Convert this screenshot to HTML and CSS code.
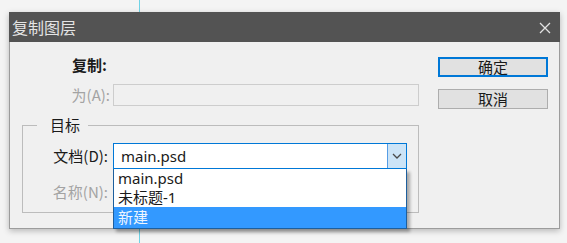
FILE: index.html
```html
<!DOCTYPE html>
<html>
<head>
    <meta charset="utf-8">
    <title>复制图层</title>
    <link rel="stylesheet" href="styles.css">
</head>
<body>
    <div class="dialog">
        <div class="titlebar">
            <span class="title">复制图层</span>
            <svg class="close" width="12" height="12" viewBox="0 0 12 12">
                <path d="M1 1 L11 11 M11 1 L1 11" stroke="#e2e2e2" stroke-width="1.3" fill="none"/>
            </svg>
        </div>
        <div class="content">
            <div class="form">
                <div class="row">
                    <span class="label bold">复制:</span>
                    <span></span>
                </div>
                <div class="row">
                    <span class="label disabled">为(A):</span>
                    <div class="field field-disabled"></div>
                </div>
                <fieldset class="group">
                    <legend>目标</legend>
                    <div class="group-row combo-row">
                        <span class="label">文档(D):</span>
                        <div class="combo">
                            <span class="combo-value">main.psd</span>
                            <span class="combo-button">
                                <svg width="10" height="6" viewBox="0 0 10 6">
                                    <path d="M1 1 L5 5 L9 1" stroke="#4a4a4a" stroke-width="1.3" fill="none"/>
                                </svg>
                            </span>
                            <ul class="combo-list">
                                <li>main.psd</li>
                                <li>未标题-1</li>
                                <li class="selected">新建</li>
                            </ul>
                        </div>
                    </div>
                    <div class="group-row name-row">
                        <span class="label disabled">名称(N):</span>
                        <div class="field field-disabled"></div>
                    </div>
                </fieldset>
            </div>
            <div class="buttons">
                <button class="btn btn-default">确定</button>
                <button class="btn">取消</button>
            </div>
        </div>
    </div>
</body>
</html>
```

FILE: styles.css
```css
body {
    margin: 0;
    padding: 12px 0 0 9px;
    font-family: "Noto Sans", "Noto Sans CJK SC", sans-serif;
    font-size: 15px;
    color: #1a1a1a;
    background: linear-gradient(to right, transparent 139px, #6fd3e6 139px, #6fd3e6 140px, transparent 140px), #f4f4f4;
    height: 231px;
    overflow: hidden;
}

.dialog {
    width: 551px;
    box-sizing: border-box;
    background-color: #f0f0f0;
    border: 1px solid #9c9c9c;
    border-top: none;
    box-shadow: 0 2px 6px rgba(0, 0, 0, 0.25);
}

.titlebar {
    height: 30px;
    background-color: #535353;
    display: flex;
    align-items: center;
    justify-content: space-between;
    padding: 0 9px 0 3px;
    margin: 0 -1px;
}

.title {
    font-family: "Noto Sans CJK SC", sans-serif;
    font-size: 16px;
    color: #e4e4e4;
    line-height: 30px;
}

.close {
    margin-top: 1px;
}

.content {
    display: flex;
    padding: 12px 0 15px 12px;
}

.form {
    width: 397px;
}

.row {
    display: grid;
    grid-template-columns: 88px 306px;
    column-gap: 3px;
    height: 22px;
    align-items: center;
    margin-bottom: 8px;
}

.label {
    font-family: "Noto Sans CJK SC", sans-serif;
    text-align: right;
    line-height: 18px;
    white-space: nowrap;
}

.bold {
    font-weight: bold;
    padding-right: 3px;
}

.disabled {
    color: #a3a3a3;
}

.field {
    height: 22px;
    box-sizing: border-box;
    border: 1px solid #cdcdcd;
}

.field-disabled {
    background-color: #f0f0f0;
}

.group {
    margin: 12px 0 0 0;
    padding: 11px 11px 8px 0;
    border: 1px solid #bcbcbc;
    min-width: 0;
}

.group legend {
    font-family: "Noto Sans CJK SC", sans-serif;
    margin-left: 14px;
    padding: 0 8px 0 13px;
    line-height: 14px;
}

.group-row {
    display: grid;
    grid-template-columns: 85px 294px;
    column-gap: 5px;
    align-items: center;
}

.combo-row {
    height: 26px;
    margin-bottom: 11px;
}

.name-row {
    height: 24px;
}

.name-row .field {
    height: 24px;
}

.combo {
    position: relative;
    height: 26px;
    box-sizing: border-box;
    border: 1px solid #0078d7;
    background-color: #fff;
    display: flex;
    align-items: center;
}

.combo-value {
    flex: 1;
    padding-left: 7px;
    line-height: 24px;
}

.combo-button {
    width: 18px;
    height: 24px;
    background-color: #cce4f7;
    border-left: 1px solid #569de5;
    display: flex;
    align-items: center;
    justify-content: center;
}

.combo-list {
    position: absolute;
    top: 25px;
    left: -1px;
    width: 294px;
    box-sizing: border-box;
    margin: 0;
    padding: 0;
    list-style: none;
    background-color: #fff;
    border: 1px solid #1d5f9e;
    border-top: none;
    box-shadow: 3px 3px 3px rgba(0, 0, 0, 0.3);
    z-index: 2;
}

.combo-list li {
    height: 19px;
    line-height: 19px;
    padding-left: 4px;
}

.combo-list li.selected {
    height: 21px;
    line-height: 21px;
    background-color: #3399ff;
    color: #eef6ff;
}

.buttons {
    display: flex;
    flex-direction: column;
    margin-left: 19px;
    margin-top: 3px;
}

.btn {
    width: 110px;
    height: 20px;
    padding: 0;
    margin-bottom: 12px;
    font-family: "Noto Sans CJK SC", sans-serif;
    font-size: 15px;
    line-height: 16px;
    color: #1a1a1a;
    background-color: #e1e1e1;
    border: 1px solid #adadad;
}

.btn-default {
    border: 2px solid #0078d7;
}
```
